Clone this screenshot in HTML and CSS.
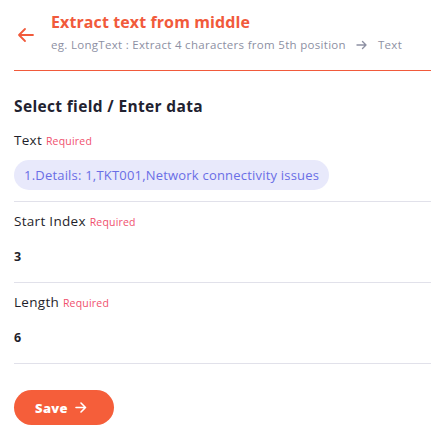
FILE: index.html
```html
<!DOCTYPE html>
<html>
<head>
<meta charset="utf-8">
<link rel="stylesheet" href="styles.css">
</head>
<body>
<div class="page">
  <header class="header">
    <button class="back" aria-label="Back">
      <svg width="18" height="16" viewBox="0 0 18 16"><path d="M16 8H2M8 2L2 8l6 6" fill="none" stroke="#f15a3b" stroke-width="1.8" stroke-linecap="round" stroke-linejoin="round"/></svg>
    </button>
    <div class="titles">
      <h1 class="title">Extract text from middle</h1>
      <div class="sub">eg. LongText : Extract 4 characters from 5th position
        <svg class="sub-arrow" width="12" height="10" viewBox="0 0 12 10"><path d="M1 5h9M6.5 1.5L10 5l-3.5 3.5" fill="none" stroke="#8d90a3" stroke-width="1.4" stroke-linecap="round" stroke-linejoin="round"/></svg>
        Text</div>
    </div>
  </header>
  <div class="rule"></div>

  <h2 class="section">Select field / Enter data</h2>

  <div class="field field-first">
    <div class="label">Text <span class="req">Required</span></div>
    <div class="chip">1.Details: 1,TKT001,Network connectivity issues</div>
  </div>
  <div class="field">
    <div class="label">Start Index <span class="req">Required</span></div>
    <div class="value">3</div>
  </div>
  <div class="field">
    <div class="label">Length <span class="req">Required</span></div>
    <div class="value">6</div>
  </div>

  <button class="save">Save
    <svg width="12" height="11" viewBox="0 0 12 11"><path d="M1 5.5h9.5M6 1l4.5 4.5L6 10" fill="none" stroke="#fff" stroke-width="1.6" stroke-linecap="round" stroke-linejoin="round"/></svg>
  </button>
</div>
</body>
</html>
```
FILE: styles.css
```css
* { box-sizing: border-box; }
html { overflow: hidden; }
body {
  margin: 0;
  background: #fff;
  font-family: "Open Sans", "Noto Sans", sans-serif;
  color: #1f1f2b;
}
.page {
  padding: 0 0 0 14px;
}
.header {
  display: flex;
  align-items: flex-start;
  gap: 16px;
  padding-top: 11px;
  padding-left: 3px;
}
.back {
  border: 0;
  background: none;
  padding: 0;
  margin-top: 16px;
  display: flex;
  cursor: pointer;
}
.titles { display: flex; flex-direction: column; }
.title {
  margin: 0;
  font-size: 16px;
  font-weight: 700;
  color: #f15a3b;
  line-height: 22px;
  letter-spacing: 0.1px;
}
.sub {
  margin-top: 4px;
  font-size: 11.5px;
  color: #8d90a3;
  line-height: 16px;
  display: flex;
  align-items: center;
  white-space: nowrap;
  letter-spacing: 0.3px;
}
.sub-arrow { margin: 0 10px 0 10px; }
.rule {
  height: 1px;
  background: #f15a3b;
  margin-top: 17px;
}
.section {
  margin: 25px 0 0;
  font-size: 15.5px;
  font-weight: 700;
  color: #222230;
  line-height: 20px;
  letter-spacing: 0.35px;
}
.field {
  border-bottom: 1px solid #e1e1ea;
}
.label {
  font-size: 13.5px;
  line-height: 18px;
  color: #1f1f2b;
  padding-top: 10px;
  letter-spacing: 0.3px;
}
.field-first .label { padding-top: 15px; }
.req {
  font-size: 10.5px;
  color: #f0506e;
  letter-spacing: 0.2px;
}
.chip {
  display: inline-block;
  margin: 10px 0 11px;
  background: #e8e9fb;
  color: #6a6ee6;
  font-size: 13px;
  line-height: 30px;
  height: 30px;
  padding: 0 10px;
  border-radius: 15px;
  letter-spacing: 0.2px;
}
.value {
  font-size: 12.5px;
  font-weight: 700;
  line-height: 18px;
  padding: 17px 0 16px;
  color: #1f1f2b;
}
.save {
  margin-top: 26px;
  width: 100px;
  height: 35px;
  border: 0;
  border-radius: 18px;
  background: #f55e3a;
  color: #fff;
  font-family: "Open Sans", "Noto Sans", sans-serif;
  font-weight: 800;
  font-size: 13px;
  display: flex;
  align-items: center;
  justify-content: center;
  gap: 7px;
  padding: 0 6px 0 0;
  letter-spacing: 0.3px;
}
```
